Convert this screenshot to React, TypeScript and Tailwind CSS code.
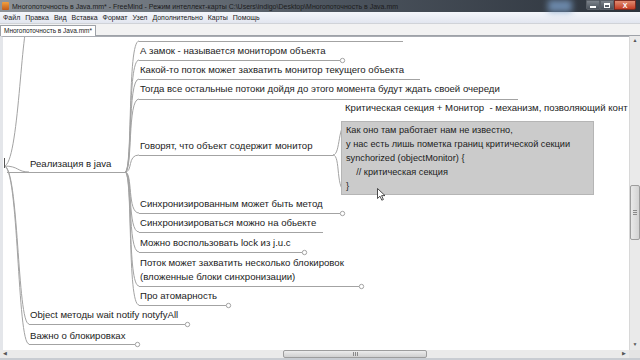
import React from "react";

type MapNode = { x: number; y: number; lines: string[] };

// canvas starts at page y=36; node y = text centre in page coords
const nodes: MapNode[] = [
  { x: 140, y: 51, lines: ["А замок - называется монитором объекта"] },
  { x: 140, y: 70, lines: ["Какой-то поток может захватить монитор текущего объекта"] },
  { x: 140, y: 89, lines: ["Тогда все остальные потоки дойдя до этого момента будут ждать своей очереди"] },
  { x: 140, y: 146, lines: ["Говорят, что объект содержит монитор"] },
  { x: 345, y: 108, lines: ["Критическая секция + Монитор  - механизм, позволяющий конт"] },
  { x: 140, y: 204, lines: ["Синхронизированным может быть метод"] },
  { x: 140, y: 223, lines: ["Синхронизироваться можно на обьекте"] },
  { x: 140, y: 243, lines: ["Можно воспользовать lock из j.u.c"] },
  { x: 140, y: 263, lines: ["Поток может захватить несколько блокировок", "(вложенные блоки синхронизации)"] },
  { x: 140, y: 296, lines: ["Про атомарность"] },
  { x: 30, y: 164, lines: ["Реализация в java"] },
  { x: 30, y: 315, lines: ["Object методы wait notify notyfyAll"] },
  { x: 30, y: 336, lines: ["Важно о блокировках"] },
];

// underlines: [x1, x2, y, folded]
const underlines: [number, number, number, boolean][] = [
  [136, 400, 40, false],
  [136, 337, 59, true],
  [136, 417, 78, false],
  [136, 515, 98, false],
  [136, 330, 154, false],
  [136, 337, 212, true],
  [136, 320, 231, false],
  [136, 299, 251, true],
  [136, 356, 285, true],
  [136, 223, 304, true],
  [4, 122, 171, false],
  [26, 182, 323, true],
  [26, 132, 343, true],
];

const edge = (px: number, py: number, cx: number, cy: number) =>
  `M${px} ${py} C${px + 8} ${py} ${cx - 12} ${cy} ${cx} ${cy}`;

const boxLines = [
  "Как оно там работает нам не известно,",
  "у нас есть лишь пометка границ критической секции",
  "synchorized (objectMonitor) {",
  "    // критическая секция",
  "}",
];

const menu = ["Файл", "Правка", "Вид", "Вставка", "Формат", "Узел", "Дополнительно", "Карты", "Помощь"];

function MindMap() {
  return (
    <div className="relative flex-1 overflow-hidden border-l-[3px] border-t border-[#a9acb2] border-l-[#e4e6ea] bg-white">
      <svg
        className="absolute left-0 top-0"
        width={627}
        height={314}
        viewBox="0 36 627 314"
        fill="none"
        stroke="#a3a3a3"
        strokeWidth={1}
      >
        {/* root edges */}
        {[20, 171, 323, 343].map((cy) => (
          <path key={"r" + cy} d={`M1 165 C16 165 ${cy < 100 ? 18 : 14} ${cy} 26 ${cy}`} />
        ))}
        {/* Реализация в java -> children */}
        {[40, 59, 78, 98, 154, 212, 231, 251, 285, 304].map((cy) => (
          <path key={"j" + cy} d={edge(122, 171, 136, cy)} />
        ))}
        {/* Говорят -> children */}
        <path d={edge(330, 154, 346, 120.5)} />
        <path d={edge(330, 154, 344, 191)} />
        {underlines.map(([x1, x2, y, folded]) => (
          <g key={x1 + "-" + y}>
            <line x1={x1} y1={y + 0.5} x2={x2} y2={y + 0.5} />
            {folded && <circle cx={x2 + 2.5} cy={y + 0.5} r={2.2} fill="#fff" />}
          </g>
        ))}
        <line x1={1.5} y1={157} x2={1.5} y2={167} stroke="#555" />
      </svg>

      {nodes.map((n) => (
        <div
          key={n.lines[0]}
          className="absolute whitespace-pre text-[9.6px] leading-[14px] text-[#1b1b1b]"
          style={{ left: n.x - 3, top: n.y - 36 - 8 }}
        >
          {n.lines.map((l) => (
            <div key={l}>{l}</div>
          ))}
        </div>
      ))}

      {/* code box */}
      <div
        className="absolute w-[253px] border border-[#b5b5b5] bg-[#cbcbcb] py-[1px] pl-[4px] text-[9.2px] leading-[14px] text-[#1b1b1b]"
        style={{ left: 338, top: 120 - 36 }}
      >
        {boxLines.map((l) => (
          <div key={l} className="whitespace-pre">
            {l}
          </div>
        ))}
      </div>

      {/* mouse pointer */}
      <svg className="absolute" style={{ left: 374, top: 187 - 36 }} width={9} height={13} viewBox="0 0 9 13">
        <path d="M0.5 0.5 L0.5 10.5 L3 8.2 L4.8 12.2 L6.4 11.5 L4.6 7.6 L8 7.6 Z" fill="#fff" stroke="#222" strokeWidth={0.8} />
      </svg>
    </div>
  );
}

function VScroll() {
  return (
    <div className="flex w-[11px] flex-col border-l border-[#d8d8d8] bg-[#eaeaea]">
      <div className="flex h-[10px] items-center justify-center text-[5px] text-[#555]">▲</div>
      <div className="h-[139px]" />
      <div className="flex h-[55px] items-center justify-center rounded-[2px] border border-[#9d9d9d] bg-gradient-to-r from-[#e9e9e9] to-[#d3d3d3]">
        <div className="flex flex-col gap-[1px]">
          <div className="h-px w-[4px] bg-[#8a8a8a]" />
          <div className="h-px w-[4px] bg-[#8a8a8a]" />
          <div className="h-px w-[4px] bg-[#8a8a8a]" />
        </div>
      </div>
      <div className="flex-1" />
      <div className="flex h-[10px] items-center justify-center text-[5px] text-[#555]">▼</div>
    </div>
  );
}

function HScroll() {
  return (
    <div className="flex h-[8px] bg-[#eaeaea]">
      <div className="flex w-[10px] items-center justify-center text-[5px] text-[#555]">◀</div>
      <div className="w-[273px]" />
      <div className="flex w-[144px] items-center justify-center rounded-[2px] border border-[#9d9d9d] bg-gradient-to-b from-[#ececec] to-[#d0d0d0]">
        <div className="flex gap-[1px]">
          <div className="h-[4px] w-px bg-[#8a8a8a]" />
          <div className="h-[4px] w-px bg-[#8a8a8a]" />
          <div className="h-[4px] w-px bg-[#8a8a8a]" />
        </div>
      </div>
      <div className="flex-1" />
      <div className="flex w-[10px] items-center justify-center text-[5px] text-[#555]">▶</div>
      <div className="w-[11px] bg-[#e4e4e4]" />
    </div>
  );
}

export default function App() {
  return (
    <div className="flex h-[360px] w-[640px] flex-col overflow-hidden bg-[#d6d9de] font-['Liberation_Sans',Arial,sans-serif]">
      {/* title bar */}
      <div className="flex h-[12px] items-center bg-gradient-to-r from-[#8e949a] via-[#4e5660] to-[#2c333c]">
        <div className="ml-[2px] mr-[3px] h-[8px] w-[7px] rounded-[1px] bg-gradient-to-b from-[#f0a040] to-[#c05a18]" />
        <span className="whitespace-nowrap text-[7px] leading-none text-[#1c1c1c]">
          Многопоточность в Java.mm* - FreeMind - Режим интеллект-карты C:\Users\indigo\Desktop\Многопоточность в Java.mm
        </span>
        <div className="ml-[150px] h-[12px] w-[24px] bg-[#7a9cc4] opacity-80 blur-[3px]" />
        <div className="flex-1" />
        <div className="flex h-[10px] self-start">
          <div className="flex w-[14px] items-center justify-center rounded-bl-[2px] border border-[#5a6068] bg-gradient-to-b from-[#7c838b] to-[#4a525b]">
            <div className="mt-[3px] h-[2px] w-[6px] bg-white" />
          </div>
          <div className="flex w-[14px] items-center justify-center border border-[#5a6068] bg-gradient-to-b from-[#7c838b] to-[#4a525b]">
            <div className="h-[5px] w-[6px] border border-t-2 border-white" />
          </div>
          <div className="flex w-[22px] items-center justify-center rounded-br-[2px] border border-[#7a2a20] bg-gradient-to-b from-[#e08a70] to-[#c23a22] text-[7px] font-bold leading-none text-white">
            X
          </div>
        </div>
        <div className="w-[4px]" />
      </div>

      {/* menu bar */}
      <div className="flex h-[11px] items-center gap-[5px] bg-gradient-to-b from-[#f4f6fb] to-[#e2e6ef] px-[3px] text-[7px] leading-none text-[#222]">
        {menu.map((m) => (
          <span key={m}>{m}</span>
        ))}
      </div>

      {/* tab row */}
      <div className="flex h-[13px] items-end border-t border-[#d0d3d8] bg-[#f2f2f2]">
        <div className="flex h-[11px] items-center whitespace-nowrap rounded-t-[1px] border border-b-0 border-[#9ea2a8] bg-white px-[3px] text-[6.5px] leading-none text-[#222]">
          Многопоточность в Java.mm*
        </div>
        <div className="h-px flex-1 self-end bg-[#9ea2a8]" />
      </div>

      {/* map + scrollbars */}
      <div className="flex flex-1 flex-col">
        <div className="flex h-[314px]">
          <MindMap />
          <VScroll />
        </div>
        <HScroll />
      </div>
      <div className="h-[2px] bg-[#c8ccd2]" />
    </div>
  );
}
